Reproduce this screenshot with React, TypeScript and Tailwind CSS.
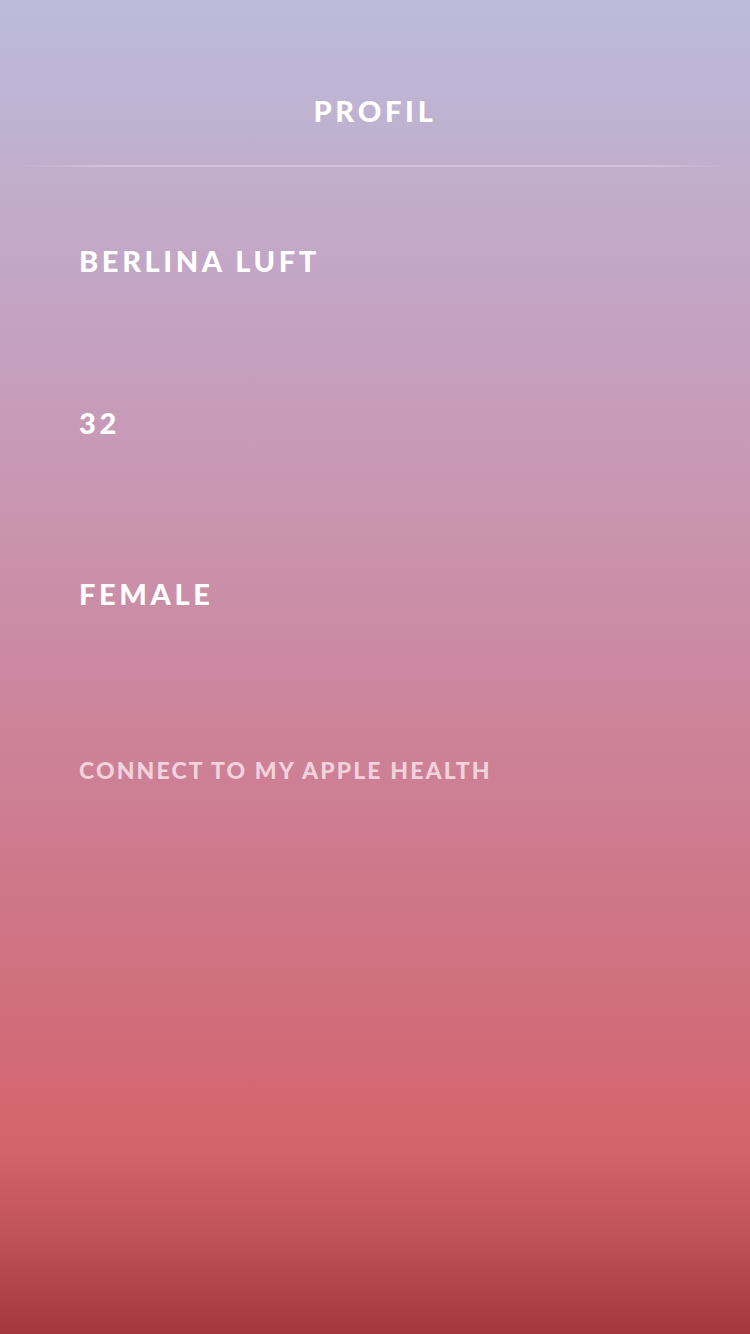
const fields = ['BERLINA LUFT', '32', 'FEMALE'];

export default function App() {
  return (
    <div
      className="w-[750px] h-[1334px] overflow-hidden text-white bg-[linear-gradient(180deg,#bcbcda_0%,#c3a6c6_20%,#c995b0_38%,#cd8197_57%,#d06f7d_75%,#d5636b_86%,#c2545c_92%,#a2373e_100%)]"
      style={{ fontFamily: 'Lato, "Open Sans", sans-serif' }}
    >
      {/* header */}
      <header className="pt-[96px]">
        <h1 className="text-center text-[29px] leading-[29px] font-black tracking-[0.13em]">PROFIL</h1>
        <div className="mt-[40px] mx-[20px] h-[2px] bg-[linear-gradient(90deg,rgba(255,255,255,0)_0%,rgba(214,204,230,0.7)_12%,rgba(214,204,230,0.7)_88%,rgba(255,255,255,0)_100%)]" />
      </header>

      {/* profile fields */}
      <main className="px-[79px] pt-[79px] flex flex-col">
        {fields.map((f, i) => (
          <div
            key={f}
            className={`text-[29px] leading-[29px] font-black tracking-[0.125em] ${i === 0 ? '' : i === 1 ? 'mt-[133px]' : 'mt-[142px]'}`}
          >
            {f}
          </div>
        ))}
        <button className="mt-[151px] self-start text-[23px] leading-[23px] font-black tracking-[0.092em] text-[#f2d2dc]">
          CONNECT TO MY APPLE HEALTH
        </button>
      </main>
    </div>
  );
}
